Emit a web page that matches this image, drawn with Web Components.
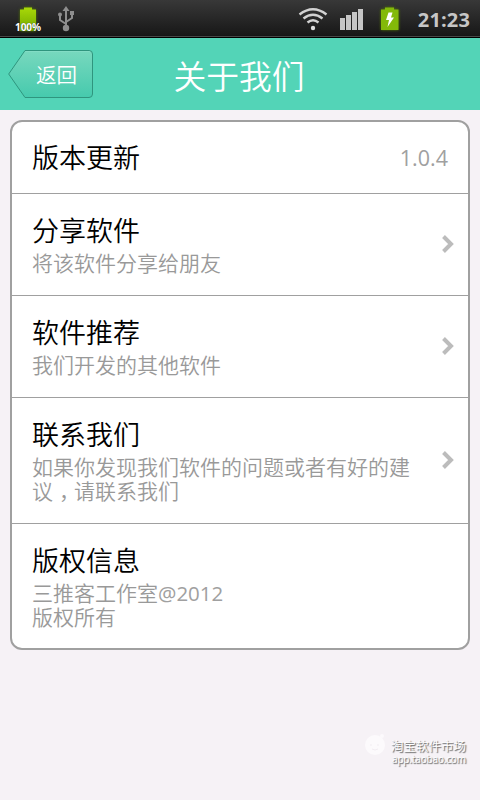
<!DOCTYPE html>
<html lang="zh-CN">
<head>
<meta charset="utf-8">
<title>关于我们</title>
<style>
html,body{margin:0;height:100%}
body{background:#f6f2f6;font-family:"Open Sans","Noto Sans CJK SC",sans-serif;overflow:hidden}
</style>
</head>
<body>
<about-screen></about-screen>
<script>
const define = (name, html) => {
  const t = document.createElement('template');
  t.innerHTML = html;
  customElements.define(name, class extends HTMLElement {
    constructor() {
      super();
      this.attachShadow({mode: 'open'}).append(t.content.cloneNode(true));
    }
  });
};

define('status-bar', `
<style>
:host{display:flex;box-sizing:border-box;height:38px;background:linear-gradient(#383838,#181818 35px,#141414 36px,#484848 36px,#484848 37px,#000 37px);padding:0 10px 0 13px;color:#c6c6c6;justify-content:space-between}
svg{display:block}
.left,.right{display:flex}
.time{font:700 20px/38px "Open Sans",sans-serif;letter-spacing:.15px;margin-left:17px;height:38px;padding-top:1px;box-sizing:border-box}
.batt{position:relative;width:30px;height:38px}
.batt span{position:absolute;left:0;top:21px;width:30px;text-align:center;font:700 10px/12px "Noto Sans",sans-serif;letter-spacing:-.1px;color:#fff;text-shadow:0 0 1px #222}
</style>
<div class="left">
  <div class="batt">
    <svg width="30" height="38"><defs><linearGradient id="g" x2="0" y2="1"><stop stop-color="#a9d908"/><stop offset="1" stop-color="#72a900"/></linearGradient></defs><path d="M11 7.500h8v2h4v21.500h-16V9.500h4z" fill="url(#g)" style="filter:drop-shadow(0 0 1.500px #567d00)"/></svg>
    <span>100%</span>
  </div>
  <svg width="40" height="38" fill="none" stroke="#8e8e8e" stroke-width="2"><path d="M23 10v19M23 24l-6-4v-5M23 22l6-4v-4"/><g fill="#8e8e8e" stroke="none"><path d="M23 6l3.500 5h-7z"/><circle cx="23" cy="28" r="3.200"/><circle cx="17" cy="14.500" r="2"/><path d="M27 11h4v4h-4z"/></g></svg>
</div>
<div class="right">
  <svg width="105" height="38"><g fill="none" stroke="#d2d2d2" stroke-width="2.400"><path d="M3.500 14.500Q17 4 30.500 14.500M7.500 18.500Q17 11 26.500 18.500M11.500 22.500Q17 18 22.500 22.500"/></g><circle cx="17" cy="28" r="2.200" fill="#ddd"/>
  <g fill="#c5c5c5"><path d="M44 18h5v12h-5zM50 15h5v15h-5zM56 12h5V30h-5zM62 9h5v21h-5z"/></g>
  <path d="M89 7.500h9v2h4.500V30H85V9.500h4z" fill="#83b909" style="filter:drop-shadow(0 0 1.500px #567d00)"/><path d="M92.500 12.500h4l-1.500 5h3l-6.500 9.500 1.500-7h-3z" fill="#fff"/></svg>
  <div class="time">21:23</div>
</div>`);

define('back-button', `
<style>
:host{display:block;position:relative;width:86px;height:48px}
svg{display:block}
span{position:absolute;left:28px;top:10px;font-size:20.500px;line-height:30px;color:#fff;white-space:nowrap;font-weight:350}
</style>
<svg width="86" height="48"><defs><linearGradient id="b" x2="0" y2="1"><stop stop-color="#78d8be"/><stop offset="1" stop-color="#46caad"/></linearGradient></defs><path d="M17 .500H81Q84.500 .500 84.500 4V44Q84.500 47.500 81 47.500H17L.700 24z" fill="url(#b)" stroke="#2f957e"/><path d="M17.500 1.500H82" stroke="#8ce0ca" fill="none" opacity=".6"/></svg>
<span><slot></slot></span>`);

define('title-bar', `
<style>
:host{display:grid;grid-template-columns:1fr auto 1fr;align-items:center;height:72px;box-sizing:border-box;padding:0 10px 0 8px;background:#53d4b7;color:#fff}
h1{margin:0;padding-top:5px;font-size:32.800px;line-height:48px;font-weight:350}
</style>
<slot name="back"></slot><h1><slot></slot></h1>`);

define('list-card', `
<style>
:host{display:block;margin:10px 10px 0;border:2px solid #a0a0a0;border-radius:12px;background:#fff;overflow:hidden}
</style><slot></slot>`);

define('list-row', `
<style>
:host{display:flex;align-items:center;box-sizing:border-box;padding:20px 12px 19px 20px;border-bottom:1px solid #a0a0a0}
:host(:last-child){border-bottom:0;padding-bottom:18px}
:host([single]){padding:19px 20px 18px}
.main{flex:1;white-space:nowrap}
.title{font-size:27px;line-height:34px;color:#000;font-weight:350}
.sub{font-size:21px;line-height:24px;color:#999;font-weight:350}
.sub slot{display:block;margin:3px 0 1px}
:host([single]) .sub{display:none}
.value{font-size:21.500px;line-height:34px;color:#a0a0a0}
svg{display:none;margin-top:-2px}
:host([link]) svg{display:block}
</style>
<div class="main"><div class="title"><slot name="title"></slot></div><div class="sub"><slot></slot></div></div>
<div class="value"><slot name="value"></slot></div>
<svg width="16" height="20"><path d="M3.500 2.500L11 10L3.500 17.500" fill="none" stroke="#bcbcbc" stroke-width="4"/></svg>`);

define('market-mark', `
<style>
:host{position:absolute;left:364px;top:732px;display:flex;gap:5px;color:#fff;text-shadow:1px 1px 1px #777,1px 1px 1px #999}
.n{font-size:12.500px;line-height:15px;margin-top:7px;white-space:nowrap;font-weight:350}
.u{font:10px/11px "Open Sans",sans-serif;padding-left:1px;letter-spacing:-.15px}
</style>
<svg width="22" height="30"><circle cx="11" cy="13" r="10" fill="#fcfafc"/><circle cx="18" cy="4" r="2" fill="#fcfafc"/><path d="M7 12v2M14 12v2M8 17q3 2 6 0" stroke="#f2edf2" fill="none"/></svg>
<div><div class="n">淘宝软件市场</div><div class="u">app.taobao.com</div></div>`);

define('about-screen', `
<style>
:host{display:block;width:480px;height:800px;position:relative}
.comma{padding-left:6px;padding-right:4.500px;font-feature-settings:"halt"}
.latin{font-weight:400;font-size:20.500px;color:#a0a0a0}
</style>
<status-bar></status-bar>
<title-bar><back-button slot="back">返回</back-button>关于我们</title-bar>
<list-card>
  <list-row single><span slot="title">版本更新</span><span slot="value">1.0.4</span></list-row>
  <list-row link><span slot="title">分享软件</span>将该软件分享给朋友</list-row>
  <list-row link><span slot="title">软件推荐</span>我们开发的其他软件</list-row>
  <list-row link><span slot="title">联系我们</span>如果你发现我们软件的问题或者有好的建<br>议<span class="comma">，</span>请联系我们</list-row>
  <list-row><span slot="title">版权信息</span>三推客工作室<span class="latin">@2012</span><br>版权所有</list-row>
</list-card>
<market-mark></market-mark>`);
</script>
</body>
</html>
